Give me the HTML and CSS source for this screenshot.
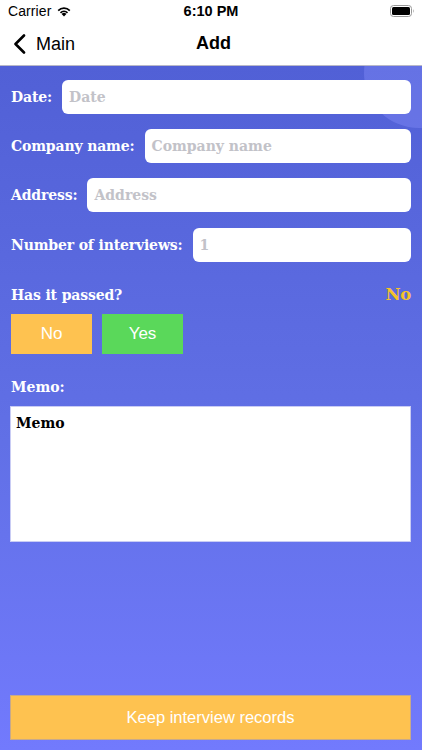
FILE: index.html
```html
<!DOCTYPE html>
<html>
<head>
<meta charset="utf-8">
<link rel="stylesheet" href="styles.css">
</head>
<body>
<div class="screen">
  <div class="topbar">
    <div class="status">
      <div class="status-left">
        <span class="carrier">Carrier</span>
        <svg class="wifi" width="16" height="12" viewBox="0 0 16 12">
          <path d="M8 11.5 L5.6 9 A3.4 3.4 0 0 1 10.4 9 Z" fill="#000"/>
          <path d="M3.9 7.3 A5.8 5.8 0 0 1 12.1 7.3 L10.9 8.5 A4.1 4.1 0 0 0 5.1 8.5 Z" fill="#000"/>
          <path d="M1.6 5 A9 9 0 0 1 14.4 5 L13.2 6.2 A7.3 7.3 0 0 0 2.8 6.2 Z" fill="#000"/>
        </svg>
      </div>
      <div class="time">6:10 PM</div>
      <div class="status-right">
        <svg width="25" height="12" viewBox="0 0 25 12">
          <rect x="0.5" y="0.5" width="21" height="11" rx="3" fill="none" stroke="#999" stroke-width="1"/>
          <rect x="2" y="2" width="18" height="8" rx="1.5" fill="#000"/>
          <path d="M23 4 Q24.5 6 23 8 Z" fill="#999"/>
        </svg>
      </div>
    </div>
    <div class="navbar">
      <div class="back">
        <svg width="13" height="20" viewBox="0 0 13 20"><path d="M11 1.5 L2.5 10 L11 18.5" fill="none" stroke="#000" stroke-width="2.6" stroke-linecap="round" stroke-linejoin="round"/></svg>
        <span>Main</span>
      </div>
      <div class="title">Add</div>
      <div class="nav-spacer"></div>
    </div>
  </div>
  <div class="content">
    <div class="deco"></div>
    <div class="form">
      <div class="row"><label>Date:</label><div class="field placeholder">Date</div></div>
      <div class="row"><label>Company name:</label><div class="field placeholder">Company name</div></div>
      <div class="row"><label>Address:</label><div class="field placeholder">Address</div></div>
      <div class="row"><label>Number of interviews:</label><div class="field placeholder">1</div></div>
      <div class="passed">
        <span class="lbl">Has it passed?</span>
        <span class="result">No</span>
      </div>
      <div class="choices">
        <div class="choice no">No</div>
        <div class="choice yes">Yes</div>
      </div>
      <div class="memo-label">Memo:</div>
      <div class="memo">Memo</div>
    </div>
    <div class="keep">Keep interview records</div>
  </div>
</div>
</body>
</html>
```

FILE: styles.css
```css
* { box-sizing: border-box; }
html, body { margin: 0; padding: 0; }
body { width: 422px; height: 750px; overflow: hidden; font-family: "Liberation Sans", Arial, sans-serif; }
.screen { width: 422px; height: 750px; display: flex; flex-direction: column; }
.topbar { background: #fff; border-bottom: 1px solid #b8b8c8; flex: none; }
.status { height: 22px; display: flex; align-items: center; justify-content: space-between; padding: 0 7px 0 8px; position: relative; }
.status-left { display: flex; align-items: center; gap: 5px; font-size: 14px; color: #000; }
.carrier { letter-spacing: 0.1px; }
.wifi { margin-top: -1px; }
.time { position: absolute; left: 0; right: 0; text-align: center; font-size: 14.5px; font-weight: bold; color: #000; pointer-events: none; }
.status-right { display: flex; align-items: center; }
.navbar { height: 43px; display: flex; align-items: center; justify-content: space-between; padding: 0 8px 0 13px; }
.back { display: flex; align-items: center; gap: 10px; font-size: 18px; color: #000; width: 100px; }
.back span { margin-top: 1px; }
.title { font-size: 18px; font-weight: bold; color: #000; }
.nav-spacer { width: 100px; }
.content { flex: 1; position: relative; overflow: hidden; background: linear-gradient(180deg, #5160d6 0%, #6170e6 55%, #727afd 100%); display: flex; flex-direction: column; justify-content: space-between; padding: 14px 11px 10px 10px; }
.deco { position: absolute; width: 110px; height: 110px; border-radius: 50%; background: rgba(140,150,255,0.35); right: -52px; top: -48px; }
.form { position: relative; display: flex; flex-direction: column; }
.row { display: flex; align-items: center; gap: 10px; margin-bottom: 15px; padding-left: 1px; }
.row:nth-child(4) { margin-top: 1px; }
.row label { font-family: "DejaVu Serif", serif; font-weight: bold; font-size: 14px; color: #fff; white-space: nowrap; letter-spacing: -0.15px; }
.field { flex: 1; height: 34px; background: #fff; border-radius: 6px; display: flex; align-items: center; padding-left: 7px; font-family: "DejaVu Serif", serif; font-weight: bold; font-size: 14px; }
.placeholder { color: #c2c2c8; }
.passed { display: flex; justify-content: space-between; align-items: center; margin-top: 8px; padding-left: 1px; }
.passed .lbl { font-family: "DejaVu Serif", serif; font-weight: bold; font-size: 14px; color: #fff; letter-spacing: -0.15px; }
.passed .result { font-family: "DejaVu Serif", serif; font-weight: bold; font-size: 16.5px; color: #f5c22a; letter-spacing: -0.3px; }
.choices { display: flex; gap: 10px; margin-top: 10px; padding-left: 1px; }
.choice { width: 81px; height: 40px; display: flex; align-items: center; justify-content: center; color: #fff; font-size: 17px; font-weight: 300; }
.choice.no { background: #fec250; }
.choice.yes { background: #5ad85a; }
.memo-label { font-family: "DejaVu Serif", serif; font-weight: bold; font-size: 14px; color: #fff; margin-top: 25px; padding-left: 1px; }
.memo { margin-top: 11px; height: 136px; background: #fff; border: 1px solid #c9ccf4; padding: 8px 5px; font-family: "DejaVu Serif", serif; font-weight: bold; font-size: 14px; color: #000; }
.keep { position: relative; height: 45px; background: #fec250; border: 1px solid #c7a98a; display: flex; align-items: center; justify-content: center; color: #fff; font-size: 16.5px; }
```
